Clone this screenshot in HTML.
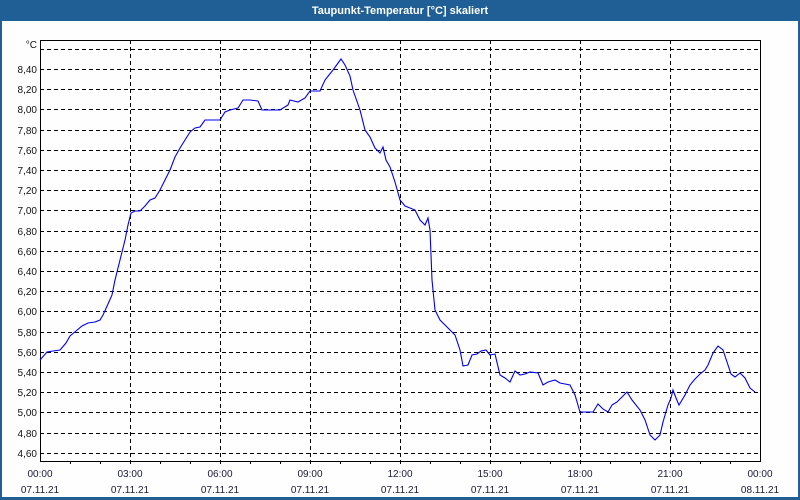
<!DOCTYPE html>
<html><head><meta charset="utf-8"><style>
html,body{margin:0;padding:0;width:800px;height:500px;overflow:hidden;background:#1f5f96}
</style></head><body>
<svg width="800" height="500" xmlns="http://www.w3.org/2000/svg" style="display:block;font-family:'Liberation Sans',sans-serif">
<rect x="0" y="0" width="800" height="500" fill="#1f5f96"/>
<rect x="2" y="21" width="796" height="476" fill="#fdfefd"/>
<text x="400" y="14" fill="#fff" font-size="11" font-weight="bold" text-anchor="middle">Taupunkt-Temperatur [°C] skaliert</text>
<g stroke="#000" stroke-width="1" stroke-dasharray="4,3" shape-rendering="crispEdges">
<line x1="40" y1="49.5" x2="760" y2="49.5"/>
<line x1="40" y1="69.5" x2="760" y2="69.5"/><line x1="40" y1="89.5" x2="760" y2="89.5"/><line x1="40" y1="109.5" x2="760" y2="109.5"/><line x1="40" y1="130.5" x2="760" y2="130.5"/><line x1="40" y1="150.5" x2="760" y2="150.5"/><line x1="40" y1="170.5" x2="760" y2="170.5"/><line x1="40" y1="190.5" x2="760" y2="190.5"/><line x1="40" y1="210.5" x2="760" y2="210.5"/><line x1="40" y1="231.5" x2="760" y2="231.5"/><line x1="40" y1="251.5" x2="760" y2="251.5"/><line x1="40" y1="271.5" x2="760" y2="271.5"/><line x1="40" y1="291.5" x2="760" y2="291.5"/><line x1="40" y1="311.5" x2="760" y2="311.5"/><line x1="40" y1="332.5" x2="760" y2="332.5"/><line x1="40" y1="352.5" x2="760" y2="352.5"/><line x1="40" y1="372.5" x2="760" y2="372.5"/><line x1="40" y1="392.5" x2="760" y2="392.5"/><line x1="40" y1="412.5" x2="760" y2="412.5"/><line x1="40" y1="433.5" x2="760" y2="433.5"/><line x1="40" y1="453.5" x2="760" y2="453.5"/>
<line x1="130.5" y1="40" x2="130.5" y2="461"/><line x1="220.5" y1="40" x2="220.5" y2="461"/><line x1="310.5" y1="40" x2="310.5" y2="461"/><line x1="400.5" y1="40" x2="400.5" y2="461"/><line x1="490.5" y1="40" x2="490.5" y2="461"/><line x1="580.5" y1="40" x2="580.5" y2="461"/><line x1="670.5" y1="40" x2="670.5" y2="461"/>
</g>
<rect x="40.5" y="40.5" width="720" height="421" fill="none" stroke="#000" shape-rendering="crispEdges"/>
<g stroke="#000" shape-rendering="crispEdges">
<line x1="70.5" y1="461" x2="70.5" y2="464"/><line x1="100.5" y1="461" x2="100.5" y2="464"/><line x1="130.5" y1="461" x2="130.5" y2="464"/><line x1="160.5" y1="461" x2="160.5" y2="464"/><line x1="190.5" y1="461" x2="190.5" y2="464"/><line x1="220.5" y1="461" x2="220.5" y2="464"/><line x1="250.5" y1="461" x2="250.5" y2="464"/><line x1="280.5" y1="461" x2="280.5" y2="464"/><line x1="310.5" y1="461" x2="310.5" y2="464"/><line x1="340.5" y1="461" x2="340.5" y2="464"/><line x1="370.5" y1="461" x2="370.5" y2="464"/><line x1="400.5" y1="461" x2="400.5" y2="464"/><line x1="430.5" y1="461" x2="430.5" y2="464"/><line x1="460.5" y1="461" x2="460.5" y2="464"/><line x1="490.5" y1="461" x2="490.5" y2="464"/><line x1="520.5" y1="461" x2="520.5" y2="464"/><line x1="550.5" y1="461" x2="550.5" y2="464"/><line x1="580.5" y1="461" x2="580.5" y2="464"/><line x1="610.5" y1="461" x2="610.5" y2="464"/><line x1="640.5" y1="461" x2="640.5" y2="464"/><line x1="670.5" y1="461" x2="670.5" y2="464"/><line x1="700.5" y1="461" x2="700.5" y2="464"/><line x1="730.5" y1="461" x2="730.5" y2="464"/>
</g>
<g font-size="10" fill="#111" text-anchor="end">
<text x="37" y="48">°C</text>
<text x="37" y="73">8,40</text><text x="37" y="93">8,20</text><text x="37" y="113">8,00</text><text x="37" y="134">7,80</text><text x="37" y="154">7,60</text><text x="37" y="174">7,40</text><text x="37" y="194">7,20</text><text x="37" y="214">7,00</text><text x="37" y="235">6,80</text><text x="37" y="255">6,60</text><text x="37" y="275">6,40</text><text x="37" y="295">6,20</text><text x="37" y="315">6,00</text><text x="37" y="336">5,80</text><text x="37" y="356">5,60</text><text x="37" y="376">5,40</text><text x="37" y="396">5,20</text><text x="37" y="416">5,00</text><text x="37" y="437">4,80</text><text x="37" y="457">4,60</text>
</g>
<g font-size="10" fill="#1a1a3a" text-anchor="middle">
<text x="40" y="477">00:00</text><text x="130" y="477">03:00</text><text x="220" y="477">06:00</text><text x="310" y="477">09:00</text><text x="400" y="477">12:00</text><text x="490" y="477">15:00</text><text x="580" y="477">18:00</text><text x="670" y="477">21:00</text><text x="760" y="477">00:00</text>
<text x="40" y="493">07.11.21</text><text x="130" y="493">07.11.21</text><text x="220" y="493">07.11.21</text><text x="310" y="493">07.11.21</text><text x="400" y="493">07.11.21</text><text x="490" y="493">07.11.21</text><text x="580" y="493">07.11.21</text><text x="670" y="493">07.11.21</text><text x="760" y="493">08.11.21</text>
</g>
<polyline fill="none" stroke="#0000ee" stroke-width="1.1" points="40,360 47,352 53,351 60,350 66,343 70,336 76,331 82,326 88,323 95,322 100,320 103,315 108,304 112,295 115,280 120,260 125,240 128,225 131,213 135,211 140,211 145,206 150,200 155,198 160,190 165,180 170,170 175,157 180,148 185,140 190,132 195,128 200,127 205,120 210,120 220,120 225,112 230,110 238,108 243,100 250,100 258,101 262,110 280,110 288,105 290,100 298,102 305,98 310,91 320,91 325,80 333,70 341,59 345,65 350,76 353,90 360,110 365,130 370,137 375,148 380,153 383,147 386,160 390,167 395,182 400,200 405,206 410,208 415,210 420,220 425,225 428,218 430,230 432,280 435,310 440,320 445,325 450,330 455,335 460,350 463,366 468,365 472,355 477,354 481,351 486,350 490,355 495,354 500,375 505,378 510,382 515,371 520,375 525,374 530,372 538,373 543,385 548,382 555,380 560,383 570,385 575,395 580,412 590,412 593,412 598,404 603,409 608,412 612,405 617,402 622,397 627,392 632,400 640,410 645,420 650,435 655,440 660,435 663,422 668,405 671,398 673,390 676,398 679,405 685,395 690,385 695,379 700,374 705,370 708,365 713,353 718,346 723,350 727,362 731,374 735,377 740,373 745,378 750,388 755,392"/>
</svg>
</body></html>
